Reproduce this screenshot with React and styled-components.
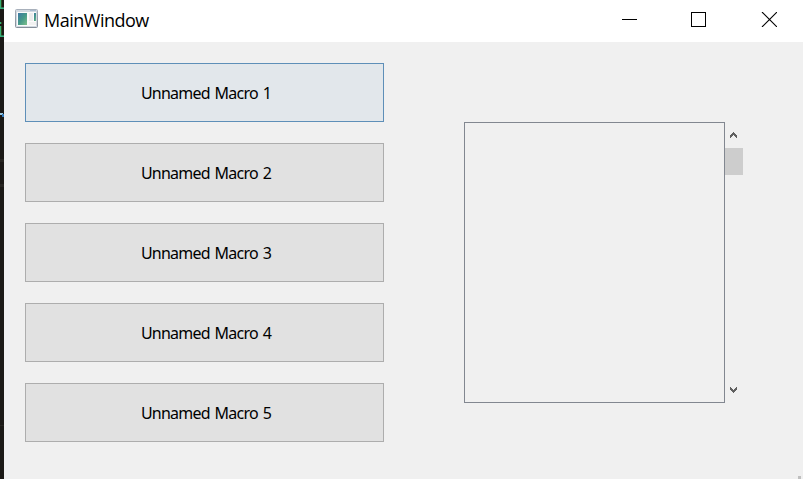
import React from "react";
import styled, { createGlobalStyle } from "styled-components";

const Global = createGlobalStyle`
  *{box-sizing:border-box}
  body{margin:0;background:#f0f0f0;overflow:hidden}
`;
const Screen = styled.div`
  display:flex;width:803px;height:479px;overflow:hidden;
`;
const EditorEdge = styled.div`
  width:4px;flex:none;background:#1b1916;overflow:hidden;
  svg{display:block}
`;
const Window = styled.main`
  flex:1;display:flex;flex-direction:column;background:#f0f0f0;position:relative;
`;
const TitleBar = styled.header`
  height:42px;flex:none;background:#fff;display:flex;align-items:flex-start;padding:9px 0 0 11px;
`;
const Title = styled.h1`
  margin:0 0 0 6px;font:400 18px/23px "Open Sans","Noto Sans",sans-serif;
  letter-spacing:-0.5px;color:#000;white-space:nowrap;flex:1;
`;
const Controls = styled.div`
  display:flex;gap:54px;padding:3px 26px 0 0;
  svg{display:block}
`;
const Body = styled.div`
  flex:1;display:flex;align-items:flex-start;padding:21px 0 0 21px;
`;
const MacroList = styled.div`
  display:flex;flex-direction:column;gap:21px;width:359px;
`;
const MacroButton = styled.button`
  height:59px;padding:0 0 0 3px;border:1px solid ${p => (p.$active ? "#5e8fb8" : "#adadad")};
  background:${p => (p.$active ? "#e2e7eb" : "#e1e1e1")};color:#000;
  font:400 16px/20px "Noto Sans","Open Sans",sans-serif;letter-spacing:-0.75px;word-spacing:1.3px;border-radius:0;
`;
const ScrollArea = styled.section`
  display:flex;margin:59px 0 0 80px;height:281px;
`;
const Frame = styled.div`
  width:261px;border:1px solid #828790;
`;
const ScrollBar = styled.div`
  width:18px;display:flex;flex-direction:column;
  svg{display:block;flex:none}
`;
const Thumb = styled.div`
  height:27px;background:#cdcdcd;
`;
const Track = styled.div`
  flex:1;
`;
const SizeGrip = styled.div`
  position:absolute;right:2px;bottom:0;width:3px;height:3px;background:#bfbfbf;
`;

const AppIcon = () => (
  <svg width="23" height="19" viewBox="0 0 23 19">
    <defs>
      <linearGradient id="pane" x1="0" y1="0" x2="1" y2="1">
        <stop offset="0" stopColor="#3f78a5" />
        <stop offset=".5" stopColor="#45998a" />
        <stop offset="1" stopColor="#7dc08a" />
      </linearGradient>
      <linearGradient id="edge" x1="0" y1="0" x2="0" y2="1">
        <stop offset="0" stopColor="#a8b0bb" />
        <stop offset="1" stopColor="#858e99" />
      </linearGradient>
    </defs>
    <rect x=".5" y=".5" width="22" height="18" rx="1" fill="#d2d9e1" stroke="url(#edge)" />
    <rect x="2" y="3" width="19" height="14" fill="#fbfbfb" />
    <path d="M15 1.5h6" stroke="#a9bdd1" />
    <rect x="3" y="4" width="9" height="12" fill="url(#pane)" />
    <rect x="14" y="4" width="4" height="8" fill="#ececec" />
    <rect x="19" y="4" width="2" height="8" fill="url(#pane)" />
    <rect x="14" y="13" width="7" height="3" fill="#f1f1f1" />
  </svg>
);

const Arrow = ({ down }) => (
  <svg width="18" height="26" viewBox="0 0 18 26" shapeRendering="crispEdges">
    <path
      fill="#606060"
      d={down
        ? "M5 10h1v1h1v1h1v1h1v-1h1v-1h1v-1h1v3h-1v1h-1v1h-1v1h-1v-1h-1v-1h-1v-1h-1z"
        : "M8 10h1v1h1v1h1v1h1v3h-1v-1h-1v-1h-1v-1h-1v1h-1v1h-1v1h-1v-3h1v-1h1v-1h1z"}
    />
  </svg>
);

export default function App() {
  return (
    <Screen>
      <Global />
      <EditorEdge>
        <svg width="4" height="479" shapeRendering="crispEdges">
          <g fill="#35ad7c" fontFamily="Liberation Mono, monospace" fontSize="20">
            <text x="-6" y="9">i</text>
            <text x="-6" y="37">i</text>
          </g>
          <path d="M0 113h3v2H0z" fill="#9bc9e4" />
          <path d="M2 114h2v3H2z" fill="#347ab9" />
          <path d="M0 159h4v3H0zM0 184h4v3H0zM0 425h4v1H0z" fill="#272521" />
        </svg>
      </EditorEdge>
      <Window>
        <TitleBar>
          <AppIcon />
          <Title>MainWindow</Title>
          <Controls>
            <svg width="15" height="15"><path d="M0 7.5h15" stroke="#000" /></svg>
            <svg width="15" height="15"><rect x=".5" y=".5" width="14" height="14" fill="none" stroke="#000" /></svg>
            <svg width="17" height="15"><path d="M2 0l15 15M17 0L2 15" stroke="#000" strokeWidth="1.1" /></svg>
          </Controls>
        </TitleBar>
        <Body>
          <MacroList>
            {[1, 2, 3, 4, 5].map(n => (
              <MacroButton key={n} $active={n === 1}>Unnamed Macro {n}</MacroButton>
            ))}
          </MacroList>
          <ScrollArea>
            <Frame />
            <ScrollBar>
              <Arrow />
              <Thumb />
              <Track />
              <Arrow down />
            </ScrollBar>
          </ScrollArea>
        </Body>
        <SizeGrip />
      </Window>
    </Screen>
  );
}
